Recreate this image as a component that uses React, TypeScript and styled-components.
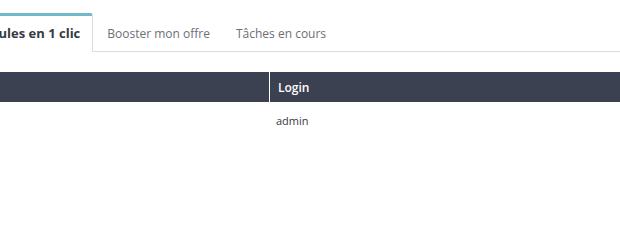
import React from "react";
import styled, { createGlobalStyle } from "styled-components";

const Global = createGlobalStyle`
  html, body { margin: 0; padding: 0; background: #fff; }
  body { font-family: "Open Sans", "Noto Sans", sans-serif; overflow: hidden; }
`;

const Page = styled.div`
  width: 620px;
  height: 242px;
  overflow: hidden;
  background: #fff;
`;

const TabList = styled.div`
  display: flex;
  align-items: flex-end;
  margin-top: 13px;
  margin-left: -42px;
  border-bottom: 1px solid #dcdcdc;
  height: 38px;
`;

const Tab = styled.div<{ $active?: boolean }>`
  box-sizing: border-box;
  height: ${(p) => (p.$active ? "39px" : "38px")};
  margin-bottom: ${(p) => (p.$active ? "-1px" : "0")};
  display: flex;
  align-items: center;
  padding: ${(p) => (p.$active ? "0 12px 2px 12px" : "0 12px 0 14px")};
  font-size: ${(p) => (p.$active ? "13px" : "12px")};
  white-space: nowrap;
  color: ${(p) => (p.$active ? "#363a41" : "#6c6f73")};
  font-weight: ${(p) => (p.$active ? 700 : 400)};
  background: #fff;
  border-top: ${(p) => (p.$active ? "3px solid #72b8c7" : "3px solid transparent")};
  border-right: ${(p) => (p.$active ? "1px solid #dcdcdc" : "none")};
  border-top-right-radius: ${(p) => (p.$active ? "3px" : "0")};
`;

const Table = styled.div`
  margin-top: 20px;
  display: grid;
  grid-template-columns: 269px 1fr;
`;

const HeadCell = styled.div<{ $divider?: boolean }>`
  height: 30px;
  background: #3b4151;
  color: #fff;
  font-size: 12px;
  font-weight: 600;
  display: flex;
  align-items: center;
  padding-left: 8px;
  border-left: ${(p) => (p.$divider ? "1px solid #fff" : "none")};
`;

const Cell = styled.div<{ $divider?: boolean }>`
  height: 36px;
  display: flex;
  align-items: center;
  padding-left: ${(p) => (p.$divider ? "6px" : "8px")};
  margin-left: ${(p) => (p.$divider ? "1px" : "0")};
  font-size: 11px;
  color: #363a41;
`;

export default function App() {
  return (
    <Page>
      <Global />
      <TabList>
        <Tab $active>Modules en 1 clic</Tab>
        <Tab>Booster mon offre</Tab>
        <Tab>Tâches en cours</Tab>
      </TabList>
      <Table>
        <HeadCell></HeadCell>
        <HeadCell $divider>Login</HeadCell>
        <Cell></Cell>
        <Cell $divider>admin</Cell>
      </Table>
    </Page>
  );
}
